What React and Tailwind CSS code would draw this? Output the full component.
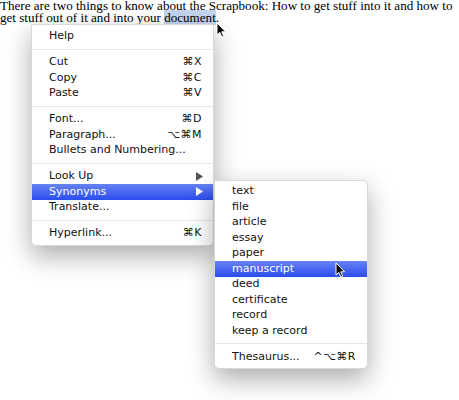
const ui = { fontFamily: '"DejaVu Sans", "Lucida Grande", sans-serif' };

const mainItems = [
  { label: 'Help' },
  'sep',
  { label: 'Cut', key: '⌘X' },
  { label: 'Copy', key: '⌘C' },
  { label: 'Paste', key: '⌘V' },
  'sep',
  { label: 'Font...', key: '⌘D' },
  { label: 'Paragraph...', key: '⌥⌘M' },
  { label: 'Bullets and Numbering...' },
  'sep',
  { label: 'Look Up', sub: true },
  { label: 'Synonyms', sub: true, active: true },
  { label: 'Translate...' },
  'sep',
  { label: 'Hyperlink...', key: '⌘K' },
];

const synonyms = [
  { label: 'text' },
  { label: 'file' },
  { label: 'article' },
  { label: 'essay' },
  { label: 'paper' },
  { label: 'manuscript', active: true },
  { label: 'deed' },
  { label: 'certificate' },
  { label: 'record' },
  { label: 'keep a record' },
  'sep',
  { label: 'Thesaurus...', key: '^⌥⌘R' },
];

function Cursor({ className }) {
  return (
    <svg className={className} width="11" height="16" viewBox="0 0 11 16">
      <path d="M1 1 L1 13 L3.8 10.4 L5.8 15 L7.6 14.2 L5.7 9.8 L9.6 9.8 Z" fill="#000" stroke="#fff" strokeWidth="1" strokeLinejoin="round" />
    </svg>
  );
}

function MenuList({ items }) {
  return items.map((it, i) => {
    if (it === 'sep') {
      return (
        <div key={i} className="h-[10.5px] flex items-center">
          <div className="h-px w-full bg-[#e6e6e6]" />
        </div>
      );
    }
    return (
      <div
        key={i}
        className={`h-[15.5px] flex items-center justify-between pl-[17px] pr-[11px] text-[11px] ${
          it.active ? 'bg-[linear-gradient(#6783f3,#2a4ced)] text-white' : 'text-[#111]'
        }`}
      >
        <span>{it.label}</span>
        {it.key && <span className="tracking-[0.5px]">{it.key}</span>}
        {it.sub && (
          <svg width="7" height="9" viewBox="0 0 7 9" className="mr-[-1px]">
            <path d="M0 0 L7 4.5 L0 9 Z" fill={it.active ? '#fff' : '#555'} />
          </svg>
        )}
      </div>
    );
  });
}

export default function App() {
  return (
    <div className="relative w-[459px] h-[400px] bg-white overflow-hidden">
      {/* document text */}
      <p
        className="text-[13.1px] leading-[12.4px] text-black whitespace-nowrap"
        style={{ fontFamily: '"Liberation Serif", "Times New Roman", serif' }}
      >
        There are two things to know about the Scrapbook: How to get stuff into it and how to
        <br />
        get stuff out of it and into your <span className="bg-[#c2d4ee]">document</span>.
      </p>

      {/* context menu */}
      <div
        className="absolute left-[31px] top-[24px] w-[183px] pt-[3.5px] pb-[4px] bg-white rounded-b-[5px] rounded-t-[2px] border border-[#d9d9d9] shadow-[0_10px_26px_rgba(0,0,0,0.33)]"
        style={ui}
      >
        <MenuList items={mainItems} />
      </div>

      {/* synonyms submenu */}
      <div
        className="absolute left-[214px] top-[180px] w-[154px] pt-[2.5px] pb-[3px] bg-white rounded-b-[5px] rounded-tr-[5px] border border-[#d9d9d9] shadow-[0_10px_26px_rgba(0,0,0,0.33)]"
        style={ui}
      >
        <MenuList items={synonyms} />
      </div>

      <Cursor className="absolute left-[216px] top-[22px]" />
      <Cursor className="absolute left-[335px] top-[262px]" />
    </div>
  );
}
